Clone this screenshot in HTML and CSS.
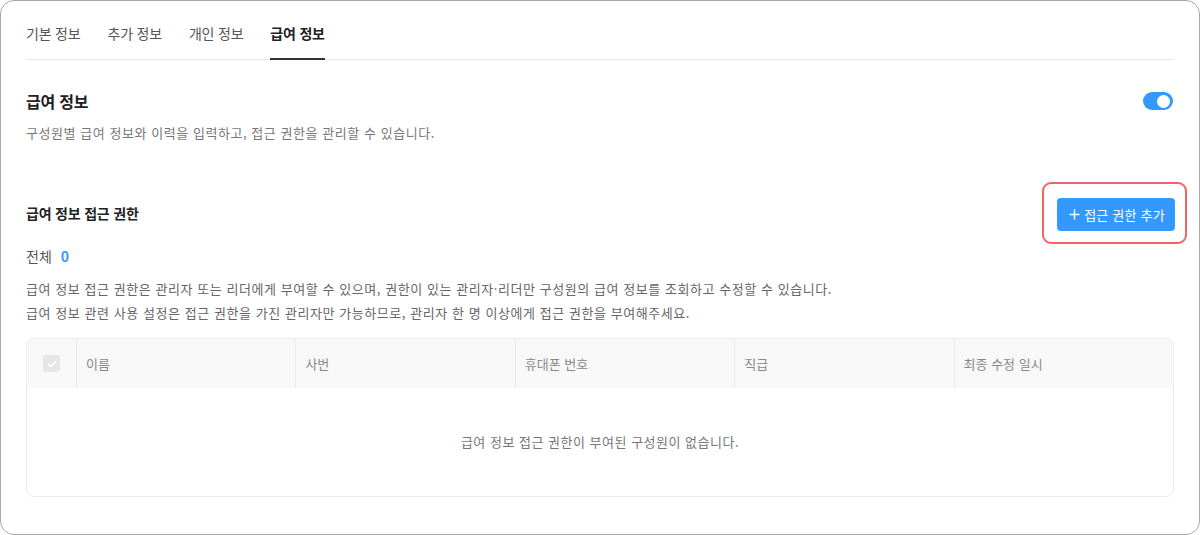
FILE: index.html
```html
<!DOCTYPE html>
<html lang="ko">
<head>
<meta charset="utf-8">
<link rel="stylesheet" href="styles.css">
</head>
<body>
<div class="frame">
  <nav class="tabs">
    <a class="tab">기본 정보</a>
    <a class="tab">추가 정보</a>
    <a class="tab">개인 정보</a>
    <a class="tab active">급여 정보</a>
  </nav>

  <section class="section-head">
    <div class="head-row">
      <h2 class="title">급여 정보</h2>
      <span class="toggle"><span class="knob"></span></span>
    </div>
    <p class="desc">구성원별 급여 정보와 이력을 입력하고, 접근 권한을 관리할 수 있습니다.</p>
  </section>

  <section class="access">
    <div class="access-row">
      <h3 class="subtitle">급여 정보 접근 권한</h3>
      <div class="highlight">
        <button class="add-btn"><svg class="plus" width="11" height="11" viewBox="0 0 11 11"><path d="M5.5 0.5 V10.5 M0.5 5.5 H10.5" stroke="#fff" stroke-width="1.5"/></svg>접근 권한 추가</button>
      </div>
    </div>
    <div class="total">전체 <b class="count">0</b></div>
    <p class="notes">급여 정보 접근 권한은 관리자 또는 리더에게 부여할 수 있으며, 권한이 있는 관리자·리더만 구성원의 급여 정보를 조회하고 수정할 수 있습니다.<br>급여 정보 관련 사용 설정은 접근 권한을 가진 관리자만 가능하므로, 관리자 한 명 이상에게 접근 권한을 부여해주세요.</p>

    <div class="table">
      <div class="thead">
        <div class="th chk"><span class="cb"><svg width="12" height="12" viewBox="0 0 12 12"><path d="M2.5 6.2 L5 8.5 L9.5 3.8" fill="none" stroke="#fff" stroke-width="1.6" stroke-linecap="round" stroke-linejoin="round"/></svg></span></div>
        <div class="th">이름</div>
        <div class="th">사번</div>
        <div class="th">휴대폰 번호</div>
        <div class="th">직급</div>
        <div class="th">최종 수정 일시</div>
      </div>
      <div class="empty">급여 정보 접근 권한이 부여된 구성원이 없습니다.</div>
    </div>
  </section>
</div>
</body>
</html>
```

FILE: styles.css
```css
* { box-sizing: border-box; }
html, body { margin: 0; padding: 0; background: #fff; }
body {
  font-family: "Noto Sans CJK KR", "Noto Sans", sans-serif;
  color: #222;
  width: 1200px;
  height: 535px;
  overflow: hidden;
}
.frame {
  width: 1200px;
  height: 535px;
  border: 1px solid #a8a8a8;
  border-radius: 14px;
  padding: 0 25px;
}
.tabs {
  display: flex;
  gap: 27px;
  border-bottom: 1px solid #e6e6e6;
  height: 59px;
  padding-top: 20px;
}
.tab {
  font-size: 14px;
  color: #555;
  line-height: 24px;
  height: 39px;
  letter-spacing: -0.2px;
}
.tab.active {
  color: #222;
  font-weight: 700;
  border-bottom: 2px solid #333;
}
.section-head { padding-top: 29px; }
.head-row {
  display: flex;
  justify-content: space-between;
  align-items: center;
  height: 24px;
}
.title {
  margin: 0;
  font-size: 16px;
  font-weight: 700;
  color: #222;
  letter-spacing: -0.2px;
}
.toggle {
  width: 30px;
  height: 18px;
  border-radius: 9px;
  background: #3399ff;
  display: flex;
  align-items: center;
  justify-content: flex-end;
  padding: 0 3px;
  margin-right: 1px;
}
.knob {
  width: 13px;
  height: 13px;
  border-radius: 50%;
  background: #fff;
}
.desc {
  margin: 10px 0 0;
  font-size: 13px;
  color: #777;
  line-height: 20px;
  letter-spacing: 0.55px;
}
.access { padding-top: 39px; }
.access-row {
  display: flex;
  justify-content: space-between;
  align-items: center;
  height: 62px;
  margin-right: -13px;
}
.subtitle {
  margin: 0;
  font-size: 14px;
  font-weight: 700;
  color: #222;
  letter-spacing: -0.2px;
}
.highlight {
  border: 2px solid #f06464;
  border-radius: 9px;
  padding: 14px 10px 11px 13px;
}
.add-btn {
  font-family: inherit;
  background: #3399ff;
  color: #fff;
  border: none;
  border-radius: 4px;
  height: 33px;
  width: 118px;
  font-size: 13px;
  display: flex;
  align-items: center;
  justify-content: center;
  gap: 4px;
  padding: 0 0 0 2px;
  letter-spacing: 0.2px;
}
.total {
  margin-top: 0;
  font-size: 14px;
  color: #555;
  line-height: 24px;
}
.count {
  color: #3399ff;
  font-weight: 700;
  margin-left: 5px;
}
.notes {
  margin: 9px 0 0;
  font-size: 13px;
  color: #666;
  line-height: 24px;
  letter-spacing: 0.56px;
}
.table {
  margin-top: 13px;
  border: 1px solid #ebebeb;
  border-radius: 8px;
  overflow: hidden;
}
.thead {
  display: grid;
  grid-template-columns: 49px repeat(5, 1fr);
  background: #f8f8f8;
  height: 49px;
}
.th {
  display: flex;
  align-items: center;
  padding-left: 9px;
  font-size: 13px;
  color: #888;
  border-left: 1px solid #ececec;
}
.th:first-child { border-left: none; }
.th.chk { justify-content: center; padding-left: 0; }
.cb {
  width: 17px;
  height: 17px;
  border-radius: 3px;
  background: #e6e6e6;
  display: flex;
  align-items: center;
  justify-content: center;
}
.empty {
  height: 108px;
  display: flex;
  align-items: center;
  justify-content: center;
  font-size: 13px;
  color: #777;
  padding-bottom: 2px;
  letter-spacing: 0.5px;
}
```
